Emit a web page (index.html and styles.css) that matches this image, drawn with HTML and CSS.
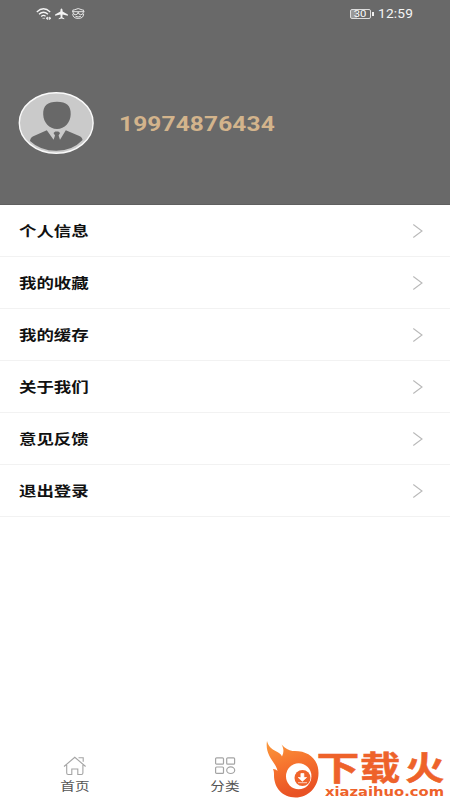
FILE: index.html
```html
<!DOCTYPE html>
<html lang="zh-CN">
<head>
<meta charset="utf-8">
<title>个人中心</title>
<link rel="stylesheet" href="styles.css">
</head>
<body>
<div class="app">
  <header class="hero">
    <div class="status">
      <svg class="signals" width="50" height="14" viewBox="0 0 50 14" fill="none" stroke="#f4f4f4">
        <path d="M.8 5Q7.500-1.400 14.200 5M3 7.300Q7.500 3.200 12 7.300M5.200 9.400Q7.500 7.600 9.600 9.200" stroke-width="1.300"/>
        <path d="M6.500 11.300H9M10 11.300l1.800-1.300v2.600zM15 11.300l-1.800-1.300v2.600z" fill="#f4f4f4" stroke-width=".7"/>
        <path d="M25.500 1.500c.8 0 1.100 1 1.100 3.100l5.300 3v1.200l-5.300-1.300-.3 2.700 2 1.200v.9l-2.800-.7-2.800.7v-.9l2-1.200-.3-2.700-5.300 1.300V7.600l5.300-3c0-2.100.3-3.100 1.100-3.100z" fill="#f4f4f4" stroke="none"/>
        <path d="M36 4.700h12.500M37 4.500q-1-2 1.200-1.600Q42.200.2 46.200 2.900q2.200-.4 1.200 1.600M37 5.200q.4 2.800 2.900 2.500 2-.2 2.300-2.500.3 2.300 2.300 2.500 2.500.3 2.900-2.500M36.700 6.800q.2 4.600 5.500 4.600t5.500-4.600M39.500 9.300q2.700 1.300 5.400 0" stroke-width=".9"/>
      </svg>
      <div class="status-right">
        <span class="battery"><span class="battery-text">30</span></span>
        <span class="clock">12:59</span>
      </div>
    </div>
    <div class="profile">
      <svg class="avatar" width="76" height="63" viewBox="0 0 76 63">
        <ellipse cx="38.200" cy="31" rx="36.900" ry="30.200" fill="#cacaca" stroke="#fafafa" stroke-width="1.400"/>
        <path d="M39 9.800c9.500 0 14 4 13.700 12.500C52.500 30.500 46.800 37 39 37S25.500 30.500 25.200 22.500C24.900 13.800 29.500 9.800 39 9.800z" fill="#686868"/>
        <path d="M28.800 38.300l6.800 9.400L37 43.500 35.500 41l1.800-1.500h3l1.800 1.500-1.500 2.500 1.400 4.200 5.800-9.400L61.300 44c2.200 1 3 2.400 3.300 4Q54.300 58.800 38.300 58.800T12 49c.4-2.300 1.300-3.800 3.300-4.700z" fill="#686868"/>
      </svg>
      <span class="phone">19974876434</span>
    </div>
  </header>
  <main class="menu">
    <div class="row"><span class="label">个人信息</span><svg class="arrow" viewBox="0 0 12 16"><path d="M1.300 1.500L10 8 1.300 14.500"/></svg></div>
    <div class="row"><span class="label">我的收藏</span><svg class="arrow" viewBox="0 0 12 16"><path d="M1.300 1.500L10 8 1.300 14.500"/></svg></div>
    <div class="row"><span class="label">我的缓存</span><svg class="arrow" viewBox="0 0 12 16"><path d="M1.300 1.500L10 8 1.300 14.500"/></svg></div>
    <div class="row"><span class="label">关于我们</span><svg class="arrow" viewBox="0 0 12 16"><path d="M1.300 1.500L10 8 1.300 14.500"/></svg></div>
    <div class="row"><span class="label">意见反馈</span><svg class="arrow" viewBox="0 0 12 16"><path d="M1.300 1.500L10 8 1.300 14.500"/></svg></div>
    <div class="row"><span class="label">退出登录</span><svg class="arrow" viewBox="0 0 12 16"><path d="M1.300 1.500L10 8 1.300 14.500"/></svg></div>
  </main>
  <nav class="tabs">
    <div class="tab">
      <svg width="24" height="20" viewBox="0 0 24 20" fill="none" stroke="#a4a4a4" stroke-width="1.100"><path d="M1 10.500L11.800 1.300 22.600 10.500M3.700 9v8q0 1.500 1.500 1.500h3.600v-5.500h6v5.500h3.600q1.500 0 1.500-1.500V9M15.500 1.800h4.700v4"/></svg>
      <span class="tab-label">首页</span>
    </div>
    <div class="tab">
      <svg width="24" height="20" viewBox="0 0 24 20" fill="none" stroke="#a4a4a4" stroke-width="1.200"><rect x="2.600" y="1.800" width="7.900" height="6.400" rx="1"/><rect x="13.700" y="1.800" width="7.900" height="6.400" rx="1"/><rect x="2.600" y="11" width="7.900" height="6.400" rx="1"/><ellipse cx="17.700" cy="14.200" rx="4" ry="3.300"/></svg>
      <span class="tab-label">分类</span>
    </div>
    <div class="tab"></div>
  </nav>
  <svg class="brand" width="190" height="70" viewBox="260 730 190 70">
    <defs><linearGradient id="flame" x1="0" y1="0" x2=".3" y2="1"><stop offset="0" stop-color="#fb9a3c"/><stop offset=".5" stop-color="#f6732e"/><stop offset="1" stop-color="#e95224"/></linearGradient></defs>
    <path d="M267 741c1.500 6 5 8 8.500 10 3.500 1.800 5.500 3 6.500 5.500 2-4 2-8-.5-12 4 4 7 6 11 6.500C307 750 318.500 758 318.500 773c0 14.500-10.500 24.500-23 24.500-13.500 0-22-10-21.500-23.500 0-2-.3-3.500-1-5 2 0 3.500.8 4.500 2-1-8-13-15-10.500-30z" fill="url(#flame)"/>
    <ellipse cx="298.700" cy="776.300" rx="12.700" ry="13" fill="#fff"/>
    <circle cx="302.500" cy="778" r="8" fill="#f0642b"/>
    <path d="M300.900 773.500h3v4h2.700l-4.200 3.800-4.200-3.800h2.700zM298 782.700h9" fill="#fff" stroke="#fff" stroke-width=".7"/>
    <g class="brand-name">
      <text transform="translate(316.500 780) scale(1.300 1)">下</text>
      <text transform="translate(360 780) scale(1.220 1)">载</text>
      <text transform="translate(405 780) scale(1.190 1)">火</text>
    </g>
    <text class="brand-url" x="325" y="795.500" textLength="119" lengthAdjust="spacingAndGlyphs">xiazaihuo.com</text>
  </svg>
</div>
</body>
</html>
```
FILE: styles.css
```css
* { box-sizing: border-box; }
body { margin: 0; background: #fff; font-family: Roboto, "Noto Sans CJK SC", sans-serif; }
.app { position: relative; width: 450px; height: 800px; display: flex; flex-direction: column; overflow: hidden; }
.hero { height: 205px; flex: none; background: #696969; border-bottom: 1px solid #5f5f5f; }
.status { height: 28px; display: flex; justify-content: space-between; padding: 7px 38px 0 36px; }
.signals { flex: none; }
.status-right { display: flex; height: 14px; align-items: center; gap: 7px; }
.battery { position: relative; width: 21px; height: 10px; border: 1px solid #ddd; border-radius: 2px; background: linear-gradient(90deg, #999 30%, #696969 30%); display: flex; align-items: center; justify-content: center; }
.battery::after { content: ""; position: absolute; left: 21px; top: 2px; width: 2px; height: 4px; background: #eee; }
.battery-text { color: #fff; font-size: 9px; line-height: 8px; transform: scaleX(1.250); }
.clock { width: 34px; color: #f5f5f5; font-size: 12px; line-height: 14px; letter-spacing: .2px; white-space: nowrap; transform: scaleX(1.140); transform-origin: left; }
.profile { display: flex; align-items: center; padding: 64px 0 0 18px; gap: 25px; }
.avatar { flex: none; }
.phone { color: #d3b48c; font-weight: 700; font-size: 20px; line-height: 24px; letter-spacing: .1px; transform: scaleX(1.224); transform-origin: left; }
.menu { flex: 1; }
.row { height: 52px; display: flex; align-items: center; justify-content: space-between; padding: 0 26px 0 19px; border-bottom: 1px solid #f2f2f2; }
.label { color: #111; font-weight: 700; font-size: 14px; line-height: 20px; transform: scaleX(1.245); transform-origin: left; }
.arrow { width: 12px; height: 16px; fill: none; stroke: #b9b9b9; stroke-width: 1.100; }
.tabs { height: 48px; display: grid; grid-template-columns: repeat(3, 1fr); }
.tab { display: flex; flex-direction: column; align-items: center; padding-top: 4px; }
.tab-label { margin-top: 2px; color: #555; font-size: 12px; line-height: 18px; transform: scaleX(1.220); }
.brand { position: absolute; right: 0; bottom: 0; }
.brand-name { font-family: "Noto Sans CJK SC", sans-serif; font-weight: 700; font-size: 33px; fill: #ee622a; stroke: #ee622a; stroke-width: .5px; }
.brand-url { font-family: "DejaVu Sans", sans-serif; font-weight: 700; font-size: 12.500px; fill: #ee622a; }
```
